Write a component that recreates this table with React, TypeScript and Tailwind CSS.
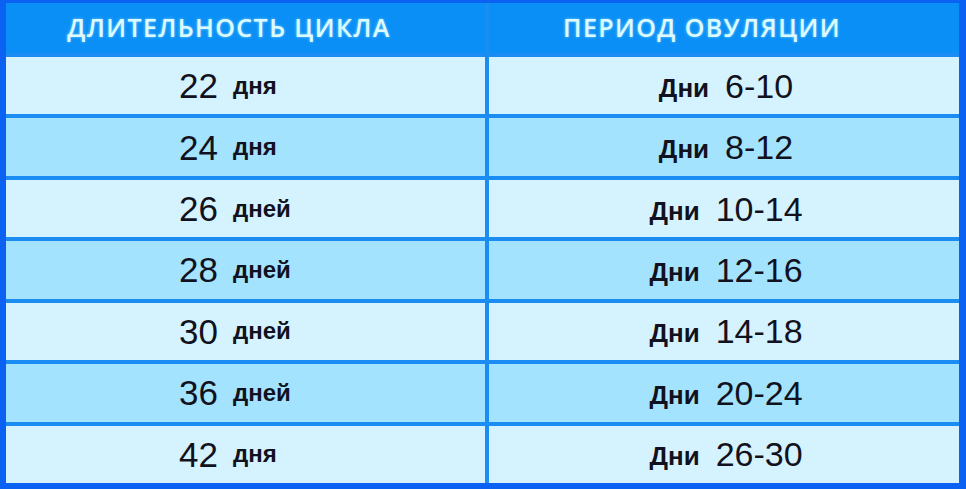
const rows = [
  { len: '22', unit: 'дня', period: '6-10' },
  { len: '24', unit: 'дня', period: '8-12' },
  { len: '26', unit: 'дней', period: '10-14' },
  { len: '28', unit: 'дней', period: '12-16' },
  { len: '30', unit: 'дней', period: '14-18' },
  { len: '36', unit: 'дней', period: '20-24' },
  { len: '42', unit: 'дня', period: '26-30' },
]

export default function App() {
  return (
    <div className="w-[966px] h-[489px] bg-[#0b62f2] pl-[6px] pr-[7px] pb-[6px] pt-[3px]">
      <div
        className="w-full h-full bg-[#1a8cf2] grid grid-cols-[479px_1fr] grid-rows-[50px_repeat(7,1fr)] gap-[4px]"
        style={{ fontFamily: '"Liberation Sans", Arial, sans-serif' }}
      >
        {/* Header */}
        <div className="bg-[#0a8ff6] flex items-center justify-center pr-[33px]">
          <span
            className="text-[25px] font-semibold text-[#dcfbff] tracking-[1.4px]"
            style={{ fontFamily: '"Open Sans", sans-serif', textShadow: '0 0 3px rgba(190,250,255,0.6)' }}
          >
            ДЛИТЕЛЬНОСТЬ ЦИКЛА
          </span>
        </div>
        <div className="bg-[#0a8ff6] flex items-center justify-center pr-[44px]">
          <span
            className="text-[25px] font-semibold text-[#dcfbff] tracking-[1.4px]"
            style={{ fontFamily: '"Open Sans", sans-serif', textShadow: '0 0 3px rgba(190,250,255,0.6)' }}
          >
            ПЕРИОД ОВУЛЯЦИИ
          </span>
        </div>

        {rows.map((r, i) => {
          const bg = i % 2 === 0 ? 'bg-[#d5f3fe]' : 'bg-[#a3e3fd]'
          return [
            <div key={`a${i}`} className={`${bg} flex items-center gap-[15px] pl-[173px] text-[#111120]`}>
              <span className="text-[35px] leading-none">{r.len}</span>
              <span className="text-[24px] font-bold leading-none">{r.unit}</span>
            </div>,
            <div key={`b${i}`} className={`${bg} flex items-center justify-center gap-[16px] text-[#111120] pl-[4px]`}>
              <span className="text-[26px] font-bold leading-none translate-y-[2px]">Дни</span>
              <span className="text-[34px] leading-none">{r.period}</span>
            </div>,
          ]
        })}
      </div>
    </div>
  )
}
